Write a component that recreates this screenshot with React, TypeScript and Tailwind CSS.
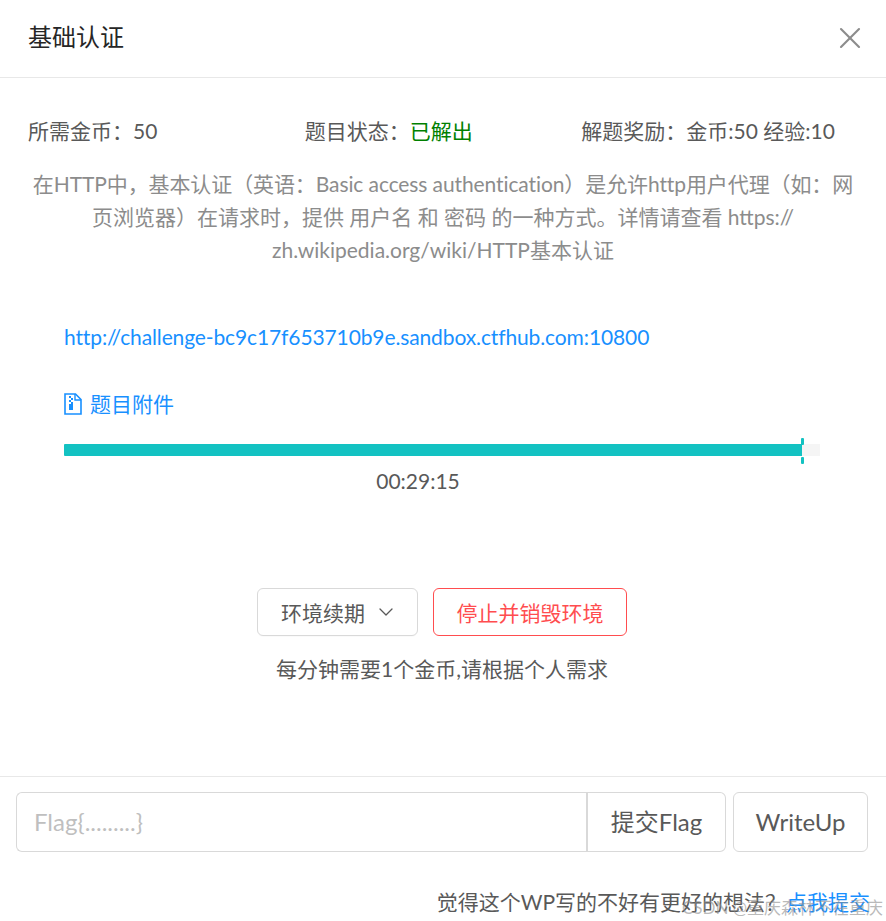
import { ChevronDown, X } from 'lucide-react';

const font = 'font-["Lato","Noto_Sans_CJK_SC",sans-serif]';

function ZipFileIcon() {
  return (
    <svg width="18" height="22" viewBox="0 0 18 22" fill="none" className="shrink-0">
      <path d="M1 1h10.5L17 6.5V21H1z" stroke="#1890ff" strokeWidth="1.6" />
      <path d="M11 1v6h6" stroke="#1890ff" strokeWidth="1.4" />
      <path d="M5 3h2v2H5zM7 5h2v2H7zM5 7h2v2H5zM7 9h2v2H7zM5 11h4v6H5z" fill="#1890ff" />
    </svg>
  );
}

export default function App() {
  return (
    <div className={`relative flex h-[921px] w-[886px] flex-col overflow-hidden bg-white text-[21px] leading-[33px] text-[#595959] ${font}`}>
      {/* Header */}
      <header className="flex h-[78px] shrink-0 items-center justify-between border-b border-[#e8e8e8] pb-[2px] pl-7 pr-[18px]">
        <h1 className="pb-[2px] text-2xl leading-[33px] text-[#262626]">基础认证</h1>
        <X size={36} strokeWidth={1.4} className="text-[#8c8c8c]" />
      </header>

      {/* Body */}
      <main className="flex flex-1 flex-col px-7 pt-[36px]">
        <div className="grid grid-cols-3">
          <div>所需金币：50</div>
          <div>
            题目状态：<span className="text-[#008000]">已解出</span>
          </div>
          <div className="whitespace-nowrap">解题奖励：金币:50 经验:10</div>
        </div>

        <p className="mt-[20px] whitespace-nowrap text-center text-[#8c8c8c]">
          <span className="tracking-[-0.1px]">在HTTP中，基本认证（英语：Basic access authentication）是允许http用户代理（如：网</span>
          <br />
          页浏览器）在请求时，提供 用户名 和 密码 的一种方式。详情请查看 https://
          <br />
          zh.wikipedia.org/wiki/HTTP基本认证
        </p>

        <div className="mt-[54px] px-9 tracking-[-0.12px] text-[#1890ff]">http://challenge-bc9c17f653710b9e.sandbox.ctfhub.com:10800</div>

        <div className="mt-[34px] flex items-center gap-[8px] pl-9 text-[#1890ff]">
          <ZipFileIcon />
          题目附件
        </div>

        {/* Progress */}
        <div className="relative mx-9 mt-[24px] h-3 w-[756px] bg-[#f5f5f5]">
          <div className="h-3 w-[738px] rounded-l-[1px] bg-[#13c2c2]" />
          <div className="absolute left-[737px] top-[-6px] h-[7px] w-[3px] rounded-[1px] bg-[#13c2c2]" />
          <div className="absolute left-[737px] top-[13px] h-[7px] w-[3px] rounded-[1px] bg-[#13c2c2]" />
        </div>
        <div className="mt-[8px] w-[780px] text-center">00:29:15</div>

        {/* Env actions */}
        <div className="mt-[91px] flex justify-center gap-[15px] pr-[2px]">
          <button className="flex h-12 w-[161px] items-center gap-[9px] rounded-md border border-[#d9d9d9] bg-white pl-[23px] shadow-[0_1px_0_rgba(0,0,0,0.02)]">
            环境续期
            <ChevronDown size={24} strokeWidth={1.3} />
          </button>
          <button className="h-12 w-[194px] rounded-md border border-[#ff4d4f] bg-white text-[#ff4d4f]">停止并销毁环境</button>
        </div>
        <div className="mt-[16px] pr-[2px] text-center">每分钟需要1个金币,请根据个人需求</div>
      </main>

      {/* Footer */}
      <footer className="h-[145px] shrink-0 border-t border-[#e8e8e8] px-4 pt-[15px]">
        <div className="flex h-[60px] text-2xl">
          <div className="flex w-[570px] items-center rounded-l-md border border-r-0 border-[#d9d9d9] pl-[17px] text-[#bfbfbf]">Flag{'{.........}'}</div>
          <button className="w-[140px] rounded-r-md border border-l-2 border-[#d9d9d9] bg-white">提交Flag</button>
          <button className="ml-[7px] w-[135px] rounded-md border border-[#d9d9d9] bg-white">WriteUp</button>
        </div>
        <div className="mt-[33px] text-right">
          觉得这个WP写的不好有更好的想法？<span className="text-[#1890ff]">点我提交</span>
        </div>
      </footer>

      {/* Watermark */}
      <div className="absolute bottom-[1px] right-[3px] text-[17px] leading-6 text-[#8c8c8c]/60">CSDN @重庆森林不在重庆</div>
    </div>
  );
}
